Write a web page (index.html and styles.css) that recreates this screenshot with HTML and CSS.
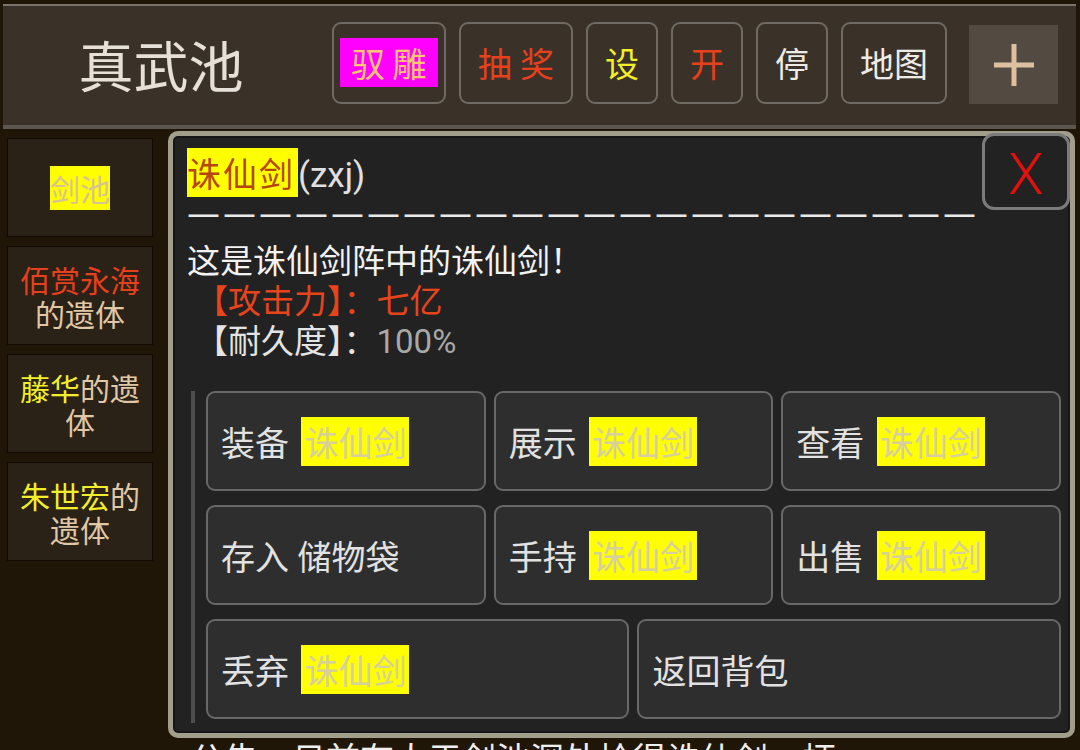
FILE: index.html
```html
<!DOCTYPE html>
<html lang="zh-CN">
<head>
    <meta charset="UTF-8">
    <title>真武池</title>
    <link rel="stylesheet" href="styles.css">
</head>
<body>
    <div class="topbar">
        <div class="title">真武池</div>
        <div class="nav">
            <button class="nav-btn nav-btn-tight"><span class="tag-magenta">驭 雕</span></button>
            <button class="nav-btn red">抽 奖</button>
            <button class="nav-btn yellow">设</button>
            <button class="nav-btn red">开</button>
            <button class="nav-btn">停</button>
            <button class="nav-btn">地图</button>
        </div>
        <div class="plus-btn">
            <svg width="40" height="42" viewBox="0 0 40 42">
                <line x1="20" y1="0" x2="20" y2="42" stroke="#dcc0a0" stroke-width="5"/>
                <line x1="0" y1="21" x2="40" y2="21" stroke="#dcc0a0" stroke-width="5"/>
            </svg>
        </div>
    </div>

    <div class="page">
        <div class="sidebar">
            <div class="side-item"><div><span class="mark-side">剑池</span></div></div>
            <div class="side-item"><div><span class="red">佰赏永海</span>的遗体</div></div>
            <div class="side-item"><div><span class="yellow">藤华</span>的遗体</div></div>
            <div class="side-item"><div><span class="yellow">朱世宏</span>的遗体</div></div>
        </div>

        <div class="main">
            <!-- 物品详情 -->
            <div class="panel">
                <div class="close">X</div>
                <div class="panel-title"><span class="mark-title">诛仙剑</span>(zxj)</div>
                <div class="dashes">——————————————————————</div>
                <div class="desc">
                    <div>这是诛仙剑阵中的诛仙剑！</div>
                    <div class="stat attack">【攻击力】：七亿</div>
                    <div class="stat">【耐久度】：<span class="dim">100%</span></div>
                </div>
                <div class="actions">
                    <div class="action"><span>装备 <span class="mark-item">诛仙剑</span></span></div>
                    <div class="action"><span>展示 <span class="mark-item">诛仙剑</span></span></div>
                    <div class="action"><span>查看 <span class="mark-item">诛仙剑</span></span></div>
                    <div class="action"><span>存入 储物袋</span></div>
                    <div class="action"><span>手持 <span class="mark-item">诛仙剑</span></span></div>
                    <div class="action"><span>出售 <span class="mark-item">诛仙剑</span></span></div>
                    <div class="action wide"><span>丢弃 <span class="mark-item">诛仙剑</span></span></div>
                    <div class="action wide"><span>返回背包</span></div>
                </div>
            </div>
            <div class="story">公告：日前有人于剑池深处拾得诛仙剑一柄。</div>
        </div>
    </div>
</body>
</html>
```

FILE: styles.css
```css
body {
    margin: 0;
    height: 750px;
    overflow: hidden;
    background-color: #201608;
    font-family: Roboto, "Noto Sans CJK SC", sans-serif;
    color: #e2e2e2;
}

.topbar {
    display: flex;
    align-items: center;
    height: 119px;
    margin: 4px 4px 0 3px;
    background-color: #3a3228;
    border-top: 2px solid #78746c;
    border-bottom: 4px solid #5b5650;
}

.title {
    width: 316px;
    text-align: center;
    font-family: "Noto Sans CJK SC", sans-serif;
    font-size: 55px;
    color: #e6e0d8;
    margin-top: -6px;
}

.nav {
    display: flex;
    gap: 13px;
    margin-left: 13px;
    margin-top: -6px;
}

.nav-btn {
    height: 82px;
    padding: 0 17px;
    background: transparent;
    border: 2px solid #6f6b64;
    border-radius: 9px;
    font-family: Roboto, "Noto Sans CJK SC", sans-serif;
    font-size: 34px;
    color: #eeeae6;
}

.nav-btn-tight {
    padding: 0 6px;
}

.tag-magenta {
    display: inline-block;
    background-color: #ff00ff;
    color: #ffc66e;
    padding: 0 11px;
    font-family: "Noto Sans CJK SC", sans-serif;
}

.red {
    color: #e6401c;
}

.yellow {
    color: #f2ee2c;
}

.plus-btn {
    display: flex;
    align-items: center;
    justify-content: center;
    width: 89px;
    height: 79px;
    margin-left: 22px;
    margin-top: -2px;
    background-color: #534b41;
}

.page {
    display: flex;
}

.sidebar {
    width: 156px;
    padding: 9px 0 0 7px;
}

.side-item {
    display: flex;
    align-items: center;
    justify-content: center;
    box-sizing: border-box;
    width: 146px;
    height: 99px;
    margin-bottom: 9px;
    padding: 0 6px;
    background-color: #2a2117;
    border: 1px solid #110a03;
    text-align: center;
    font-family: "Noto Sans CJK SC", sans-serif;
    font-size: 30px;
    line-height: 34px;
    color: #e0c8a6;
}

.mark-side {
    background-color: #ffff00;
    color: #d8c294;
    line-height: normal;
}

.main {
    flex: 1;
    padding: 2px 5px 0 5px;
}

.panel {
    position: relative;
    z-index: 1;
    background-color: #222;
    border: 5px solid #a29e8c;
    border-radius: 10px;
    box-shadow: inset 0 0 0 2px #161616;
    padding: 12px 9px 10px 14px;
}

.close {
    position: absolute;
    top: -3px;
    right: 0;
    box-sizing: border-box;
    width: 88px;
    height: 77px;
    padding-top: 4px;
    display: flex;
    align-items: center;
    justify-content: center;
    background-color: #222;
    border: 3px solid #7b7b7b;
    border-radius: 12px;
    font-family: Roboto, sans-serif;
    font-size: 58px;
    font-weight: 300;
    color: #e2100e;
}

.panel-title {
    height: 50px;
    line-height: 50px;
    font-size: 35px;
    color: #e0e0e0;
}

.mark-title {
    background-color: #ffff00;
    color: #b4460e;
    padding: 0 3px 0 0;
    font-family: "Noto Sans CJK SC", sans-serif;
    font-size: 34px;
    letter-spacing: 2px;
}

.dashes {
    height: 44px;
    line-height: 32px;
    font-family: "DejaVu Sans", sans-serif;
    font-size: 33px;
    letter-spacing: 3px;
    color: #e8e8e8;
    white-space: nowrap;
}

.desc {
    font-size: 33px;
    line-height: 40px;
    color: #f2f2f2;
}

.stat {
    padding-left: 8px;
    color: #e4e4e4;
}

.attack {
    color: #e8441c;
}

.dim {
    color: #a8a8a8;
}

.actions {
    display: grid;
    grid-template-columns: repeat(6, 1fr);
    gap: 14px 8px;
    margin: 29px 0 0 4px;
    padding: 0 0 4px 11px;
    border-left: 4px solid #4e4e4e;
}

.action {
    grid-column: span 2;
    display: flex;
    align-items: center;
    height: 96px;
    padding-left: 13px;
    background-color: #2e2e2e;
    border: 2px solid #686868;
    border-radius: 9px;
    font-size: 34px;
    color: #e2e2e2;
    white-space: nowrap;
}

.action.wide {
    grid-column: span 3;
}

.mark-item {
    margin-left: 4px;
    padding: 0 3px;
    background-color: #ffff00;
    color: #d6cf9e;
    font-family: "Noto Sans CJK SC", sans-serif;
}

.story {
    margin-top: -5px;
    padding-left: 22px;
    font-size: 34px;
    color: #eeeeee;
}
```
